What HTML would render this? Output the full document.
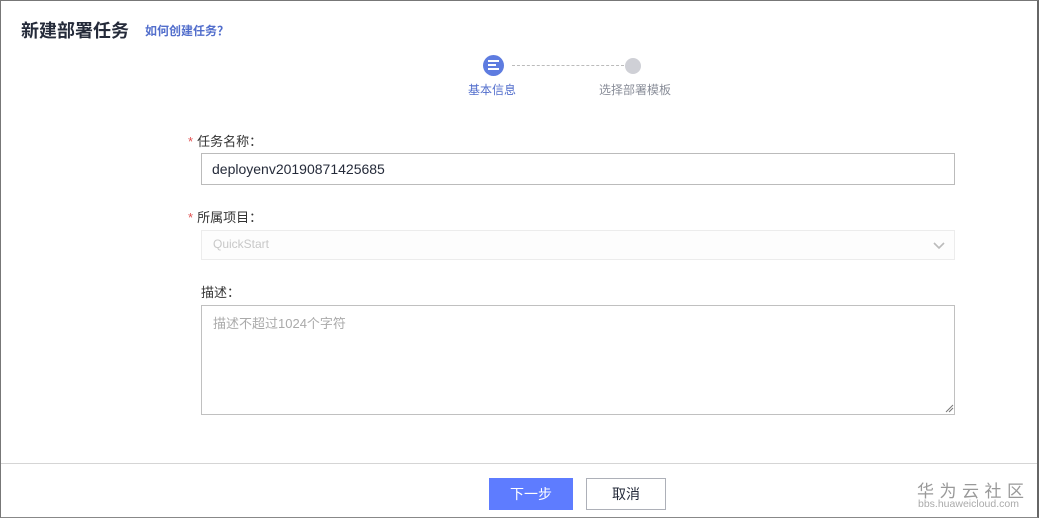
<!DOCTYPE html>
<html><head><meta charset="utf-8"><style>
*{box-sizing:border-box;margin:0;padding:0}
body{width:1039px;height:518px;background:#fff;font-family:"Liberation Sans","Noto Sans CJK SC",sans-serif;position:relative;overflow:hidden}
.frame{position:absolute;left:0;top:0;width:1039px;height:518px;border:1px solid #777;border-right:2px solid #666;border-bottom:1px solid #888}
.a{position:absolute;white-space:nowrap}
.lbl{font-size:13px;color:#333}
.star{color:#e05050;margin-right:4px}
.box{position:absolute;left:201px;width:754px;border:1px solid #c8c8c8;background:#fff}
</style></head><body>
<div class="frame"></div>
<div class="a" style="left:21px;top:17px;font-size:18px;font-weight:bold;color:#252b3a">新建部署任务</div>
<div class="a" style="left:145px;top:22px;font-size:12px;font-weight:bold;color:#526ecc">如何创建任务？</div>
<div class="a" style="left:483px;top:55px;width:21px;height:21px;border-radius:50%;background:#5e7ce0"></div>
<div class="a" style="left:488px;top:60px;width:11px;height:2px;background:#fff"></div>
<div class="a" style="left:488px;top:64px;width:8px;height:2px;background:#fff"></div>
<div class="a" style="left:488px;top:68px;width:11px;height:2px;background:#fff"></div>
<div class="a" style="left:512px;top:65px;width:112px;border-top:1px dashed #bbb"></div>
<div class="a" style="left:625px;top:58px;width:16px;height:16px;border-radius:50%;background:#cfd0d6"></div>
<div class="a" style="left:468px;top:81px;font-size:12px;color:#526ecc">基本信息</div>
<div class="a" style="left:599px;top:81px;font-size:12px;color:#8a8e99">选择部署模板</div>
<div class="a lbl" style="left:188px;top:131px"><span class="star">*</span>任务名称：</div>
<div class="box" style="top:153px;height:32px;border-color:#bbb"></div>
<div class="a" style="left:212px;top:161px;font-size:14px;color:#252b3a">deployenv20190871425685</div>
<div class="a lbl" style="left:188px;top:207px"><span class="star">*</span>所属项目：</div>
<div class="box" style="top:230px;height:30px;border-color:#ececec;background:#fdfdfd"></div>
<div class="a" style="left:213px;top:237px;font-size:12px;color:#c8c8c8">QuickStart</div>
<svg class="a" style="left:933px;top:240px" width="12" height="10"><path d="M1 3l5 5 5-5" stroke="#bbb" stroke-width="1.6" fill="none"/></svg>
<div class="a lbl" style="left:201px;top:282px">描述：</div>
<div class="box" style="top:305px;height:110px;border-color:#c0c0c0"></div>
<div class="a" style="left:213px;top:313px;font-size:13px;color:#aaa">描述不超过1024个字符</div>
<svg class="a" style="left:944px;top:403px" width="10" height="10"><path d="M9 2L2 9M9 5L5 9" stroke="#777" stroke-width="1"/></svg>
<div class="a" style="left:1px;top:463px;width:1036px;border-top:1px solid #d5d5d5"></div>
<div class="a" style="left:489px;top:478px;width:84px;height:32px;background:#5e7cff;color:#fff;font-size:14px;text-align:center;line-height:32px">下一步</div>
<div class="a" style="left:586px;top:478px;width:80px;height:32px;border:1px solid #adb0b8;color:#252b3a;font-size:14px;text-align:center;line-height:30px">取消</div>
<div class="a" style="left:917px;top:477px;font-size:17px;color:#999;letter-spacing:5.5px">华为云社区</div>
<div class="a" style="left:918px;top:498px;font-size:10.5px;color:#aaa">bbs.huaweicloud.com</div>
</body></html>
